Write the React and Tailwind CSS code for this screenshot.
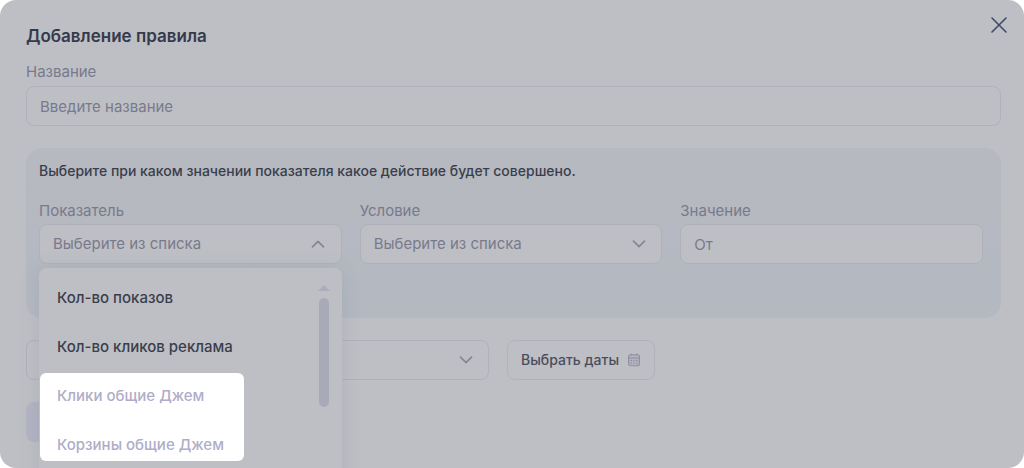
import React, { useState } from "react";

const METRICS = ["Кол-во показов", "Кол-во кликов реклама"];
const JAM_METRICS = ["Клики общие Джем", "Корзины общие Джем"];

const fieldClass =
  "h-10 w-full rounded-lg border border-[#b0b1ba] bg-[#bebfc4] px-[13px] text-[15px] text-[#787a8c] outline-none placeholder:text-[#787a8c] placeholder:opacity-100";

const Chevron = ({ className = "" }) => (
  <svg viewBox="0 0 14 8" fill="none" stroke="#858597" strokeWidth="1.7" strokeLinecap="round"
       strokeLinejoin="round" className={`h-2 w-3.5 ${className}`} aria-hidden="true">
    <path d="M1.5 1.2 7 6.7l5.5-5.5" />
  </svg>
);

const CalendarIcon = () => (
  <svg viewBox="0 0 14 14" fill="none" stroke="#8e8ea3" className="h-3.5 w-3.5" aria-hidden="true">
    <rect x="1.6" y="1.8" width="10.8" height="11" rx="2" fill="#b2b3be" strokeWidth="1.1" />
    <path d="M1.6 5h10.8M4.2.6v2M9.8.6v2" strokeWidth="1.1" />
    <path d="M3.6 7.6h1.4M6.3 7.6h1.4M9 7.6h1.4M3.6 10.2h1.4M6.3 10.2h1.4M9 10.2h1.4" strokeWidth="1.1" />
  </svg>
);

const Field = ({ id, label, children }) => (
  <div className="relative min-w-0 flex-1">
    <label htmlFor={id} className="mb-[3px] block text-[15px] leading-5 text-[#787a8c]">{label}</label>
    {children}
  </div>
);

const Option = ({ label, selected, disabled, onPick }) => (
  <button type="button" role="option" aria-selected={selected} disabled={disabled} onClick={() => onPick(label)}
          className="block text-left text-[15px] leading-6 font-medium whitespace-nowrap text-[#3a3e4c] disabled:text-[#afadc8]">
    {label}
  </button>
);

export default function App() {
  const [name, setName] = useState("");
  const [value, setValue] = useState("");
  const [metric, setMetric] = useState("");
  const [open, setOpen] = useState(true);

  const pick = (label) => {
    setMetric(label);
    setOpen(false);
  };

  return (
    <div className="bg-white font-['Inter','Noto_Sans',sans-serif]">
      <main className="relative min-h-screen overflow-hidden rounded-2xl bg-[#bebfc4] pt-6 pr-[23px] pb-[26px] pl-[26px]">
        <header className="flex items-start justify-between">
          <h1 className="text-[17px] leading-6 font-semibold text-[#353a4b]">Добавление правила</h1>
          <button type="button" aria-label="Закрыть" className="absolute top-[17px] right-[17px]">
            <svg viewBox="0 0 16 16" stroke="#424966" strokeWidth="1.6" strokeLinecap="round" className="h-4 w-4">
              <path d="m1 1 14 14M15 1 1 15" />
            </svg>
          </button>
        </header>

        <div className="mt-3.5">
          <label htmlFor="name" className="mb-1 block text-[15px] leading-5 text-[#787a8c]">Название</label>
          <input id="name" type="text" placeholder="Введите название" value={name}
                 onChange={(e) => setName(e.target.value)} className={fieldClass} />
        </div>

        {/* Условие срабатывания */}
        <section className="mt-[22px] rounded-2xl bg-linear-to-b from-[#b6b9bf] to-[#b4b8c1] pt-[13px] pr-[18px] pb-[54px] pl-[13px]">
          <p className="text-sm leading-5 font-medium text-[#3a3e4c]">
            Выберите при каком значении показателя какое действие будет совершено.
          </p>

          <div className="mt-5 flex gap-[18px]">
            <Field id="metric" label="Показатель">
              <button id="metric" type="button" aria-haspopup="listbox" aria-expanded={open}
                      onClick={() => setOpen(!open)}
                      className={`${fieldClass} flex items-center justify-between pr-4`}>
                <span>{metric || "Выберите из списка"}</span>
                <Chevron className={open ? "rotate-180" : ""} />
              </button>

              {open && (
                <div role="listbox" aria-label="Показатель"
                     className="absolute inset-x-0 top-[67px] z-10 h-60 rounded-lg bg-[#bebfc4] pt-[18px] shadow-[0_2px_20px_rgba(90,110,130,0.16)]">
                  <div className="flex flex-col items-start gap-[25px] px-[18px]">
                    {METRICS.map((m) => (
                      <Option key={m} label={m} selected={m === metric} onPick={pick} />
                    ))}
                  </div>
                  <div className="mt-3.5 ml-px flex w-fit flex-col items-start gap-[25px] rounded-md bg-white pt-[11px] pr-5 pb-1 pl-[17px]">
                    {JAM_METRICS.map((m) => (
                      <Option key={m} label={m} selected={false} disabled onPick={pick} />
                    ))}
                  </div>
                  {/* Полоса прокрутки */}
                  <div className="absolute top-[17px] right-3 flex flex-col items-center gap-[7px]">
                    <svg viewBox="0 0 12 6" fill="#acadb9" className="h-1.5 w-3" aria-hidden="true">
                      <path d="M6 0l6 6H0z" />
                    </svg>
                    <div className="h-[109px] w-2.5 rounded-full bg-[#a9aab7]" />
                  </div>
                </div>
              )}
            </Field>

            <Field id="condition" label="Условие">
              <div className="relative">
                <select id="condition" className={`${fieldClass} appearance-none`}>
                  <option>Выберите из списка</option>
                </select>
                <Chevron className="pointer-events-none absolute top-4 right-4" />
              </div>
            </Field>

            <Field id="value" label="Значение">
              <input id="value" type="text" placeholder="От" value={value}
                     onChange={(e) => setValue(e.target.value)} className={fieldClass} />
            </Field>
          </div>
        </section>

        <div className="mt-[22px] flex gap-[18px]">
          <div className="relative w-full max-w-[463px]">
            <select aria-label="Действие" className={`${fieldClass} appearance-none`} />
            <Chevron className="pointer-events-none absolute top-4 right-4" />
          </div>
          <button type="button"
                  className="flex h-10 items-center gap-2 rounded-lg border border-[#b0b1ba] px-[13px] text-sm font-medium whitespace-nowrap text-[#4a4d5c]">
            Выбрать даты
            <CalendarIcon />
          </button>
        </div>

        <button type="button" aria-label="Добавить" className="mt-[22px] block h-10 w-40 rounded-lg bg-[#b3b4c2]" />
      </main>
    </div>
  );
}
